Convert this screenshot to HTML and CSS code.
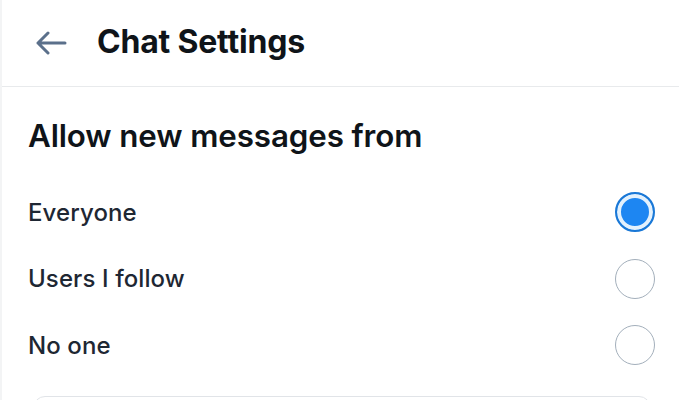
FILE: index.html
```html
<!DOCTYPE html>
<html>
<head>
<meta charset="utf-8">
<link rel="stylesheet" href="styles.css">
</head>
<body>
<div class="page">
  <header class="header">
    <svg class="back" width="32" height="24" viewBox="0 0 32 24" fill="none" stroke="#5b708b" stroke-width="3" stroke-linecap="round" stroke-linejoin="round">
      <path d="M30 12H3M13 2L3 12l10 10"/>
    </svg>
    <h1 class="title">Chat Settings</h1>
  </header>
  <section class="section">
    <h2 class="heading">Allow new messages from</h2>
    <div class="options">
      <label class="option"><span class="label">Everyone</span><span class="radio checked"></span></label>
      <label class="option"><span class="label">Users I follow</span><span class="radio"></span></label>
      <label class="option"><span class="label">No one</span><span class="radio"></span></label>
    </div>
    <div class="card"></div>
  </section>
</div>
</body>
</html>
```

FILE: styles.css
```css
* { box-sizing: border-box; }
html, body { margin: 0; padding: 0; background: #fff; }
body { font-family: Inter, "Noto Sans", sans-serif; color: #0f1419; }
.page { border-left: 2px solid #f3f4f5; height: 400px; overflow: hidden; }
.header {
  height: 87px;
  display: flex;
  align-items: center;
  padding-left: 33px;
  border-bottom: 1px solid #e8eaec;
}
.back { margin-right: 30px; }
.title { margin: 0; font-size: 32px; font-weight: 700; letter-spacing: -0.2px; color: #0f1419; line-height: 40px; margin-top: -2px; }
.section { padding: 29px 24px 0 26px; }
.heading { margin: 0; font-size: 31.3px; font-weight: 600; color: #0f1419; line-height: 40px; letter-spacing: -0.1px; }
.options { margin-top: 36px; display: flex; flex-direction: column; gap: 26.5px; }
.option { display: flex; align-items: center; justify-content: space-between; height: 40px; }
.label { font-size: 24px; font-weight: 550; color: #1e2733; letter-spacing: 0.1px; }
.radio { width: 40px; height: 40px; border-radius: 50%; border: 1.5px solid #a3afbb; background: #fff; }
.radio.checked {
  border: 2px solid #1a78d6;
  background: #1d86f2;
  box-shadow: inset 0 0 0 4px #e3f1fd;
}
.card { margin: 31px 4px 0 5px; height: 40px; border: 1.5px solid #e1e4e8; border-radius: 12px; }
```
